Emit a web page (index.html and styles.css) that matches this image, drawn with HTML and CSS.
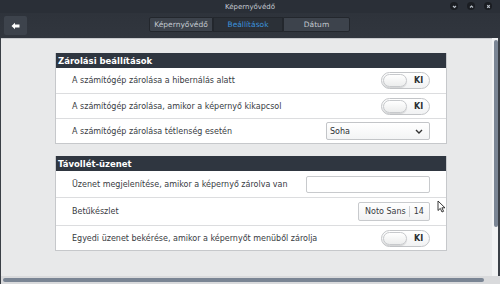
FILE: index.html
```html
<!DOCTYPE html>
<html lang="hu">
<head>
  <meta charset="UTF-8" />
  <title>Képernyővédő</title>
  <link rel="stylesheet" href="styles.css">
</head>
<body>
  <div class="window">
    <div class="titlebar">
      <span class="title">Képernyővédő</span>
      <div class="controls">
        <span class="ctl">
          <svg width="7" height="7" viewBox="0 0 7 7"><path d="M2 3 L3.5 4.5 L5 3" fill="none" stroke="#b9c0c9" stroke-width="1.2"/></svg>
        </span>
        <span class="ctl">
          <svg width="7" height="7" viewBox="0 0 7 7"><path d="M2 4.5 L3.5 3 L5 4.5" fill="none" stroke="#b9c0c9" stroke-width="1.2"/></svg>
        </span>
        <span class="ctl">
          <svg width="7" height="7" viewBox="0 0 7 7"><path d="M2.2 2.2 L4.8 4.8 M4.8 2.2 L2.2 4.8" fill="none" stroke="#b9c0c9" stroke-width="1.2"/></svg>
        </span>
      </div>
    </div>

    <div class="toolbar">
      <button class="back">
        <svg width="9" height="8" viewBox="0 0 9 8"><path d="M0.5 4 L4 0.8 L4 2.6 L8.5 2.6 L8.5 5.4 L4 5.4 L4 7.2 Z" fill="#ffffff"/></svg>
      </button>
      <div class="tabs">
        <span class="tab">Képernyővédő</span>
        <span class="tab active">Beállítások</span>
        <span class="tab">Dátum</span>
      </div>
    </div>

    <div class="main">
      <div class="content">
        <div class="panel">
          <div class="panel-head">Zárolási beállítások</div>
          <div class="row r1">
            <span>A számítógép zárolása a hibernálás alatt</span>
            <span class="toggle"><span class="knob"></span><b>KI</b></span>
          </div>
          <div class="row r1">
            <span>A számítógép zárolása, amikor a képernyő kikapcsol</span>
            <span class="toggle"><span class="knob"></span><b>KI</b></span>
          </div>
          <div class="row r1">
            <span>A számítógép zárolása tétlenség esetén</span>
            <span class="select">Soha
              <svg width="8" height="5" viewBox="0 0 8 5"><path d="M1 1 L4 4 L7 1" fill="none" stroke="#333" stroke-width="1.4"/></svg>
            </span>
          </div>
        </div>

        <div class="panel second">
          <div class="panel-head">Távollét-üzenet</div>
          <div class="row r2">
            <span>Üzenet megjelenítése, amikor a képernyő zárolva van</span>
            <span class="entry"></span>
          </div>
          <div class="row r3">
            <span>Betűkészlet</span>
            <span class="fontbtn"><span class="fname">Noto Sans</span><span class="fsize">14</span></span>
          </div>
          <div class="row r1">
            <span>Egyedi üzenet bekérése, amikor a képernyőt menüből zárolja</span>
            <span class="toggle"><span class="knob"></span><b>KI</b></span>
          </div>
        </div>

        <svg class="cursor" width="10" height="13" viewBox="0 0 10 13">
          <path d="M1 1 L1 10.5 L3.3 8.4 L5 12 L6.6 11.3 L4.9 7.8 L8 7.8 Z" fill="#ffffff" stroke="#222" stroke-width="0.9" stroke-linejoin="round"/>
        </svg>
      </div>
      <div class="vscroll"><span class="vthumb"></span></div>
    </div>

    <div class="hscroll"><span class="hthumb"></span></div>
  </div>
</body>
</html>
```

FILE: styles.css
```css
* {
  box-sizing: border-box;
}
body {
  margin: 0;
  font-family: 'DejaVu Sans', sans-serif;
  background: #2b3038;
}

.window {
  width: 500px;
  height: 284px;
  display: flex;
  flex-direction: column;
  background: #2e333b;
  overflow: hidden;
}

.titlebar {
  height: 13px;
  position: relative;
  display: flex;
  align-items: center;
  justify-content: center;
  background: #2a2f37;
}

.title {
  font-size: 7px;
  color: #c5cbd3;
}

.controls {
  position: absolute;
  right: 8px;
  top: 2px;
  display: flex;
  gap: 9px;
}

.ctl {
  width: 8px;
  height: 8px;
  border-radius: 50%;
  background: #1a1d22;
  display: flex;
  align-items: center;
  justify-content: center;
}

.toolbar {
  height: 25px;
  display: flex;
  align-items: flex-start;
  padding: 3px 0 0 4px;
  background: linear-gradient(#2e333b, #31363e);
}

.back {
  width: 23px;
  height: 19px;
  border: none;
  border-radius: 2px;
  background: #3d434c;
  display: flex;
  align-items: center;
  justify-content: center;
  padding: 0;
}

.tabs {
  display: flex;
  margin-left: 122px;
  margin-top: 1px;
}

.tab {
  height: 15px;
  display: flex;
  align-items: center;
  justify-content: center;
  font-size: 7.5px;
  color: #c2c8cf;
  background: #3d434c;
  border: 1px solid #23272d;
}

.tab:nth-child(1) {
  width: 64px;
  border-radius: 2px 0 0 2px;
}

.tab:nth-child(2) {
  width: 70px;
}

.tab:nth-child(3) {
  width: 67px;
  border-radius: 0 2px 2px 0;
}

.tab.active {
  background: #2b3037;
  color: #3b90dc;
}

.main {
  flex: 1;
  display: flex;
  border-left: 1px solid #3a3f46;
}

.content {
  flex: 1;
  background: #e8e9ea;
  padding: 14px 0 0 54px;
  position: relative;
  border-top: 1px solid #c9cbce;
}

.vscroll {
  width: 8px;
  background: #f1f2f3;
  border-right: 2px solid #3a3f46;
  padding: 2px 0 0 2px;
}

.vthumb {
  display: block;
  width: 4px;
  height: 187px;
  border-radius: 2px;
  background: #7a8594;
}

.hscroll {
  height: 8px;
  background: #d9dadc;
  padding: 2px 0 0 2px;
  border-left: 1px solid #3a3f46;
}

.hthumb {
  display: block;
  width: 481px;
  height: 4px;
  border-radius: 2px;
  background: #7a8594;
}

.panel {
  width: 392px;
  background: #ffffff;
  border: 1px solid #c6c8cb;
  border-top: none;
}

.panel.second {
  margin-top: 12px;
}

.panel-head {
  height: 15px;
  background: #2f3640;
  color: #ffffff;
  font-size: 8.5px;
  font-weight: bold;
  padding-left: 2px;
  display: flex;
  align-items: center;
}

.row {
  display: flex;
  align-items: center;
  justify-content: space-between;
  padding: 0 16px 0 16px;
  font-size: 8px;
  color: #383b3f;
  border-top: 1px solid #dcdddf;
  white-space: nowrap;
}

.row:nth-child(2) {
  border-top: none;
}

.r1 {
  height: 25px;
}

.r2 {
  height: 26px;
}

.r3 {
  height: 28px;
}

.toggle {
  width: 49px;
  height: 17px;
  border: 1px solid #c3c5c8;
  border-radius: 9px;
  background: linear-gradient(#ffffff, #f1f2f3);
  display: flex;
  align-items: center;
  padding: 0 0 0 1px;
}

.knob {
  width: 24px;
  height: 13px;
  border: 1px solid #c7c9cc;
  border-radius: 7px;
  background: linear-gradient(#ffffff, #eceded);
  box-shadow: 0 1px 1px #0002;
}

.toggle b {
  font-size: 8px;
  color: #2b2e33;
  margin-left: 7px;
}

.select {
  width: 104px;
  height: 18px;
  border: 1px solid #c3c5c8;
  border-radius: 2px;
  background: linear-gradient(#ffffff, #f3f4f5);
  display: flex;
  align-items: center;
  justify-content: space-between;
  padding: 0 6px 0 3px;
  color: #2b2e33;
}

.entry {
  width: 124px;
  height: 17px;
  border: 1px solid #c8cacd;
  border-radius: 2px;
  background: #ffffff;
}

.fontbtn {
  width: 72px;
  height: 19px;
  border: 1px solid #c8cacd;
  border-radius: 2px;
  background: linear-gradient(#ffffff, #f1f2f3);
  display: flex;
  align-items: center;
  color: #383b3f;
}

.fname {
  padding: 0 3px 0 6px;
  border-right: 1px solid #cfd1d4;
  line-height: 11px;
}

.fsize {
  padding-left: 4px;
}

.cursor {
  position: absolute;
  left: 436px;
  top: 161px;
}
```
